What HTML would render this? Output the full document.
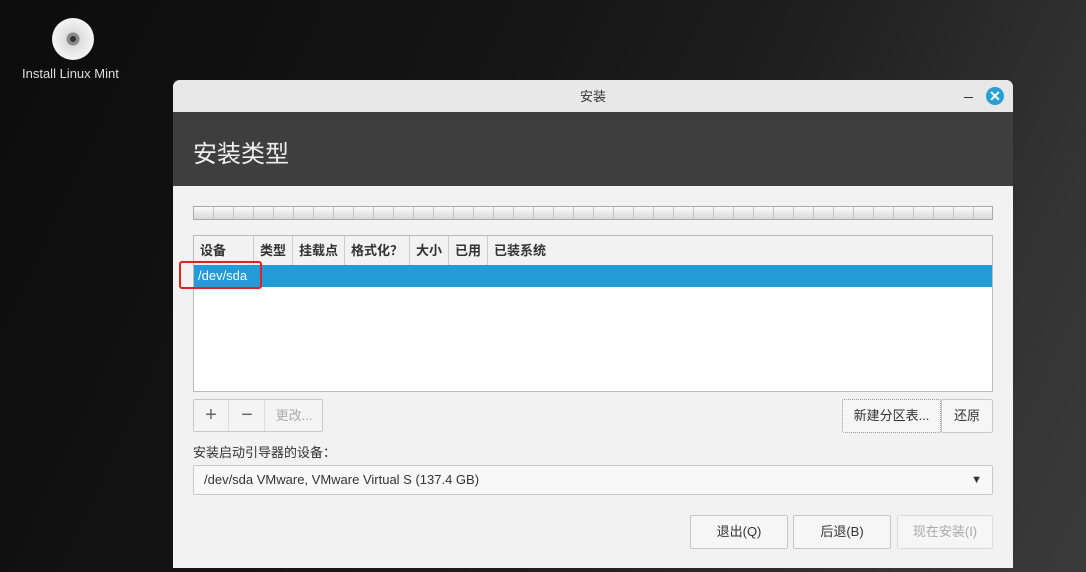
<!DOCTYPE html><html><head><meta charset="utf-8"><style>
*{margin:0;padding:0;box-sizing:border-box}
body{width:1086px;height:572px;overflow:hidden;position:relative;background:#121212;font-family:"Liberation Sans","Noto Sans CJK SC",sans-serif;}
.bg{position:absolute;inset:0;background:linear-gradient(115deg,#0c0c0c 0%,#151515 40%,#1e1e1e 60%,#333 85%,#3a3a3a 100%)}
.a{position:absolute}
.win{left:173px;top:80px;width:840px;height:488px;background:#f2f2f2;border-radius:7px 7px 0 0;overflow:hidden}
.tb{left:0;top:0;width:840px;height:32px;background:#e8e8e8;font-size:13px;color:#333;text-align:center;line-height:34px}
.hd{left:0;top:32px;width:840px;height:74px;background:#3e3e3e;color:#eee;font-size:24px;padding:22px 0 0 20px}
.ruler{left:20px;top:126px;width:800px;height:14px;border:1px solid #aaa;background:linear-gradient(#f8f8f8,#ddd);
background-image:repeating-linear-gradient(90deg,transparent 0 19px,#c4c4c4 19px 20px),linear-gradient(#fafafa,#d8d8d8)}
.tbl{left:20px;top:155px;width:800px;height:157px;border:1px solid #bbb;background:#fff}
.th{position:absolute;top:0;height:29px;line-height:29px;font-size:13px;font-weight:bold;color:#333;padding-left:6px;border-right:1px solid #ccc;background:#f2f2f2}
.sel{left:0;top:29px;width:798px;height:22px;background:#229bd8;color:#fff;font-size:13px;line-height:22px;padding-left:4px}
.btn{position:absolute;border:1px solid #c8c8c8;background:#f6f6f6;font-size:13px;color:#333;text-align:center;border-radius:2px}
</style></head><body>
<div class="bg"></div>
<div class="a" style="left:52px;top:18px;width:42px;height:42px;border-radius:50%;background:radial-gradient(circle,#333 0 3px,#888 3px 6px,#ddd 7px,#f3f3f3 20px)"></div>
<div class="a" style="left:22px;top:66px;color:#ddd;font-size:13px">Install Linux Mint</div>
<div class="a win">
 <div class="a tb">安装</div>
 <div class="a" style="left:791px;top:17px;width:9px;height:1px;background:#333"></div>
 <div class="a" style="left:813px;top:7px;width:18px;height:18px;border-radius:50%;background:#2a9fd6;color:#fff;font-size:14px;font-weight:bold;text-align:center;line-height:18px">✕</div>
 <div class="a hd">安装类型</div>
 <div class="a ruler"></div>
 <div class="a tbl">
  <div class="th" style="left:0;width:60px">设备</div>
  <div class="th" style="left:60px;width:39px">类型</div>
  <div class="th" style="left:99px;width:52px">挂载点</div>
  <div class="th" style="left:151px;width:65px">格式化？</div>
  <div class="th" style="left:216px;width:39px">大小</div>
  <div class="th" style="left:255px;width:39px">已用</div>
  <div class="th" style="left:294px;width:504px;border-right:0">已装系统</div>
  <div class="a sel">/dev/sda</div>
 </div>
 <div class="a" style="left:6px;top:181px;width:83px;height:28px;border:2px solid #e8201c;border-radius:3px"></div>
 <div class="btn" style="left:20px;top:319px;width:130px;height:33px;background:#f4f4f4"></div>
 <div class="a" style="left:20px;top:319px;width:36px;height:33px;text-align:center;line-height:32px;font-size:20px;color:#666">+</div>
 <div class="a" style="left:55px;top:320px;width:1px;height:31px;background:#ddd"></div>
 <div class="a" style="left:56px;top:319px;width:36px;height:33px;text-align:center;line-height:32px;font-size:20px;color:#666">−</div>
 <div class="a" style="left:91px;top:320px;width:1px;height:31px;background:#ddd"></div>
 <div class="a" style="left:92px;top:319px;width:58px;height:33px;text-align:center;line-height:33px;font-size:13px;color:#aaa">更改...</div>
 <div class="btn" style="left:669px;top:319px;width:99px;height:34px;line-height:32px;border-style:dotted;border-color:#999">新建分区表...</div>
 <div class="btn" style="left:768px;top:319px;width:52px;height:34px;line-height:32px">还原</div>
 <div class="a" style="left:20px;top:362px;font-size:13px;color:#333">安装启动引导器的设备：</div>
 <div class="btn" style="left:20px;top:385px;width:800px;height:30px;line-height:28px;text-align:left;padding-left:10px;background:#f8f8f8">/dev/sda VMware, VMware Virtual S (137.4 GB)<span style="position:absolute;right:10px;font-size:11px">▼</span></div>
 <div class="btn" style="left:517px;top:435px;width:98px;height:34px;line-height:32px">退出(Q)</div>
 <div class="btn" style="left:620px;top:435px;width:98px;height:34px;line-height:32px">后退(B)</div>
 <div class="btn" style="left:724px;top:435px;width:96px;height:34px;line-height:32px;color:#aaa;border-color:#ddd">现在安装(I)</div>
</div>
</body></html>
